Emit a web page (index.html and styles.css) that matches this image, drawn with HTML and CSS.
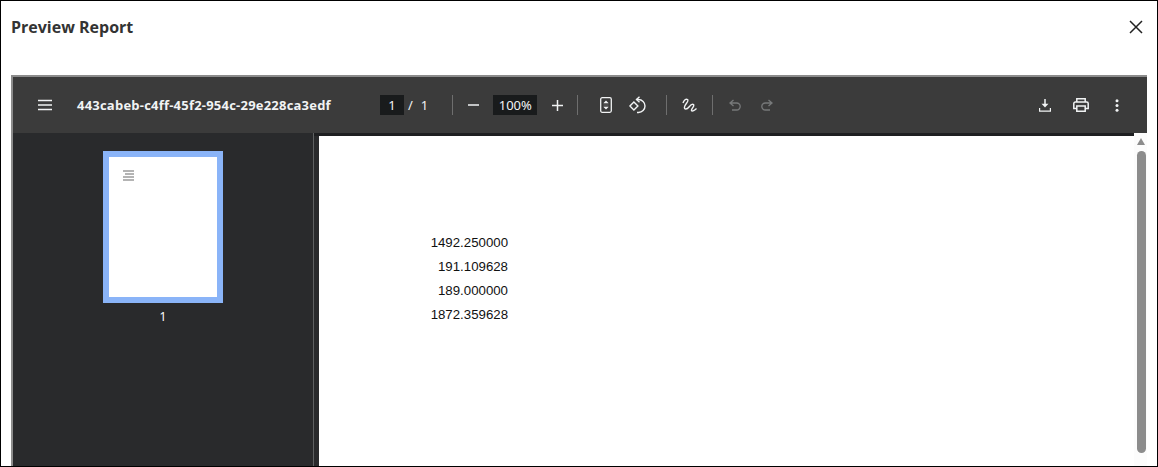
FILE: index.html
```html
<!DOCTYPE html>
<html lang="en">
<head>
    <meta charset="UTF-8">
    <title>Preview Report</title>
    <link rel="stylesheet" href="styles.css">
</head>
<body>
    <div class="dialog">
        <div class="dialog-header">
            <h1>Preview Report</h1>
            <svg class="close-icon" width="14" height="14" viewBox="0 0 14 14"><path d="M1 1l12 12M13 1L1 13" stroke="#222" stroke-width="1.5" fill="none"/></svg>
        </div>
        <div class="viewer">
            <div class="toolbar">
                <div class="toolbar-left">
                    <svg class="icon" width="14" height="12" viewBox="0 0 14 12"><path d="M0 1.500h14M0 6h14M0 10.500h14" stroke="#f1f3f4" stroke-width="1.400"/></svg>
                    <span class="file-name">443cabeb-c4ff-45f2-954c-29e228ca3edf</span>
                </div>
                <div class="toolbar-center">
                    <span class="field page-field">1</span>
                    <span class="page-slash">/</span>
                    <span class="page-total">1</span>
                    <span class="divider divider-page"></span>
                    <svg class="icon zoom-out" width="11" height="12" viewBox="0 0 11 12"><path d="M0 6h11" stroke="#f1f3f4" stroke-width="1.500"/></svg>
                    <span class="field zoom-field">100%</span>
                    <svg class="icon zoom-in" width="11" height="11" viewBox="0 0 11 11"><path d="M0 5.500h11M5.500 0v11" stroke="#f1f3f4" stroke-width="1.500"/></svg>
                    <span class="divider divider-zoom"></span>
                    <svg class="icon fit" width="12" height="16" viewBox="0 0 12 16"><rect x=".7" y=".7" width="10.600" height="14.600" rx="1.500" stroke="#f1f3f4" stroke-width="1.300" fill="none"/><path d="M3.500 6L6 3.500 8.500 6zM3.500 10L6 12.500 8.500 10z" fill="#f1f3f4"/><path d="M3.500 6.800h5M3.500 9.200h5" stroke="#9a9a9a" stroke-width=".8"/></svg>
                    <svg class="icon rotate" width="18" height="18" viewBox="0 0 18 18"><path d="M.9 10l4-4 4 4-4 4z" stroke="#f1f3f4" stroke-width="1.400" fill="none"/><path d="M7.500 3.500h2a6.500 6.500 0 0 1 0 13H8" stroke="#f1f3f4" stroke-width="1.400" fill="none"/><path d="M10.500.8L7.500 3.500l3 2.700" stroke="#f1f3f4" stroke-width="1.400" fill="none"/></svg>
                    <span class="divider divider-rotate"></span>
                    <svg class="icon draw" width="15" height="14" viewBox="0 0 15 14"><path d="M1 5C2 2 4 .5 5.500 1.500 7.500 3 3 6 2.500 9 2 12 5 11.500 7 9s3-3.500 4.500-2.500C13 8 9 11 9.500 12.500 10 14 13 12 14.500 10.500" stroke="#f1f3f4" stroke-width="1.400" fill="none"/></svg>
                    <span class="divider divider-draw"></span>
                    <svg class="icon undo" width="12" height="12" viewBox="0 0 12 12"><path d="M4.500 1L1 4l3.500 3M1.500 4h6.200a3.500 3.500 0 0 1 0 7H3" stroke="#77797a" stroke-width="1.300" fill="none"/></svg>
                    <svg class="icon redo" width="12" height="12" viewBox="0 0 12 12"><path d="M7.500 1L11 4 7.500 7M10.500 4H4.300a3.500 3.500 0 0 0 0 7H9" stroke="#77797a" stroke-width="1.300" fill="none"/></svg>
                </div>
                <div class="toolbar-right">
                    <svg class="icon" width="12" height="13" viewBox="0 0 12 13"><path d="M6 0v7" stroke="#f1f3f4" stroke-width="1.500"/><path d="M2.500 4.800L6 8.600l3.500-3.800z" fill="#f1f3f4"/><path d="M.6 9v3.200h10.800V9" stroke="#f1f3f4" stroke-width="1.200" fill="none"/></svg>
                    <svg class="icon printer" width="16" height="14" viewBox="0 0 16 14"><path d="M3.800 4V.8h8.400V4M3.800 10.500H.8V5.500A1.500 1.500 0 0 1 2.300 4h11.400a1.500 1.500 0 0 1 1.500 1.500v5h-3M3.800 8h8.400v5.200H3.800z" stroke="#f1f3f4" stroke-width="1.500" fill="none"/></svg>
                    <svg class="icon dots" width="4" height="13" viewBox="0 0 4 13"><circle cx="2" cy="1.700" r="1.500" fill="#f1f3f4"/><circle cx="2" cy="6.500" r="1.500" fill="#f1f3f4"/><circle cx="2" cy="11.300" r="1.500" fill="#f1f3f4"/></svg>
                </div>
            </div>
            <div class="viewer-body">
                <div class="sidebar">
                    <div class="thumb">
                        <div class="thumb-lines">
                            <span></span><span class="short"></span><span></span><span></span>
                        </div>
                    </div>
                    <div class="thumb-label">1</div>
                </div>
                <div class="main">
                    <div class="page">
                        <div class="page-values">
                            <div>1492.250000</div>
                            <div>191.109628</div>
                            <div>189.000000</div>
                            <div>1872.359628</div>
                        </div>
                    </div>
                    <div class="scrollbar">
                        <span class="scroll-up"></span>
                        <span class="scroll-thumb"></span>
                    </div>
                </div>
            </div>
        </div>
    </div>
</body>
</html>
```

FILE: styles.css
```css
* {
    margin: 0;
    padding: 0;
    box-sizing: border-box;
}

html, body {
    height: 100%;
    overflow: hidden;
}

body {
    font-family: 'Noto Sans', sans-serif;
    background: white;
}

.dialog {
    height: 467px;
    border: 1px solid #000;
    padding: 0 10px;
    display: flex;
    flex-direction: column;
}

.dialog-header {
    height: 74px;
    padding-top: 14px;
    display: flex;
    justify-content: space-between;
    align-items: flex-start;
}

.dialog-header h1 {
    font-family: 'Open Sans', sans-serif;
    font-size: 16px;
    font-weight: 700;
    line-height: 24px;
    color: #333;
}

.close-icon {
    margin: 5px 4px 0 0;
}

.viewer {
    flex: 1;
    min-height: 0;
    display: flex;
    flex-direction: column;
    border-top: 2px solid #8c8c8c;
    border-left: 2px solid #8c8c8c;
}

.toolbar {
    height: 56px;
    flex-shrink: 0;
    background: #3b3b3b;
    color: #f1f3f4;
    display: flex;
    align-items: center;
}

.icon {
    display: block;
    flex-shrink: 0;
}

.toolbar-left {
    width: 367px;
    padding-left: 25px;
    display: flex;
    align-items: center;
    gap: 25px;
}

.file-name {
    font-family: 'Open Sans', sans-serif;
    font-size: 13px;
    font-weight: 700;
    letter-spacing: 0.22px;
    white-space: nowrap;
}

.toolbar-center {
    display: flex;
    align-items: center;
    font-size: 13px;
}

.field {
    background: #191b1c;
    height: 20px;
    line-height: 20px;
    text-align: center;
}

.page-field {
    width: 24px;
}

.page-slash {
    margin-left: 4px;
}

.page-total {
    margin-left: 8px;
}

.divider {
    width: 1px;
    height: 20px;
    background: #6e6e6e;
}

.divider-page {
    margin: 0 15px 0 24px;
}

.divider-zoom {
    margin: 0 22px 0 14px;
}

.divider-rotate {
    margin: 0 15px 0 19px;
}

.divider-draw {
    margin: 0 16px 0 15px;
}

.zoom-field {
    width: 44px;
    margin: 0 15px 0 14px;
}

.rotate {
    margin-left: 17px;
}

.redo {
    margin-left: 20px;
}

.toolbar-right {
    margin-left: auto;
    padding-right: 28px;
    display: flex;
    align-items: center;
}

.printer {
    margin-left: 22px;
}

.dots {
    margin-left: 26px;
}

.viewer-body {
    flex: 1;
    min-height: 0;
    display: flex;
}

.sidebar {
    width: 300px;
    flex-shrink: 0;
    background: #292a2c;
    padding-top: 18px;
    display: flex;
    flex-direction: column;
    align-items: center;
}

.thumb {
    width: 120px;
    height: 152px;
    background: white;
    border: 6px solid #8ab4f8;
    padding: 13px 14px;
}

.thumb-lines {
    width: 11px;
    display: flex;
    flex-direction: column;
    gap: 1px;
}

.thumb-lines span {
    height: 2px;
    background: #b4b4b4;
}

.thumb-lines .short {
    margin-left: 2px;
}

.thumb-label {
    margin-top: 6px;
    font-size: 12px;
    line-height: 16px;
    color: white;
}

.main {
    flex: 1;
    min-width: 0;
    display: flex;
    background: #292a2c;
    border-left: 1px solid #5f6162;
    box-shadow: inset 0 3px 0 #1e1f21;
    padding-left: 5px;
}

.page {
    flex: 1;
    margin-top: 3px;
    background: white;
    padding-top: 95px;
}

.page-values {
    width: 189px;
    text-align: right;
    font-family: 'Liberation Sans', sans-serif;
    font-size: 13.25px;
    line-height: 24px;
    color: #111;
}

.scrollbar {
    width: 13px;
    background: #fcfcfc;
    display: flex;
    flex-direction: column;
    padding: 5px 0 0 3px;
}

.scroll-up {
    width: 0;
    height: 0;
    border-left: 4.5px solid transparent;
    border-right: 4.5px solid transparent;
    border-bottom: 7px solid #8c8c8c;
}

.scroll-thumb {
    width: 9px;
    height: 302px;
    margin-top: 6px;
    border-radius: 5px;
    background: #8c8c8c;
}
```
